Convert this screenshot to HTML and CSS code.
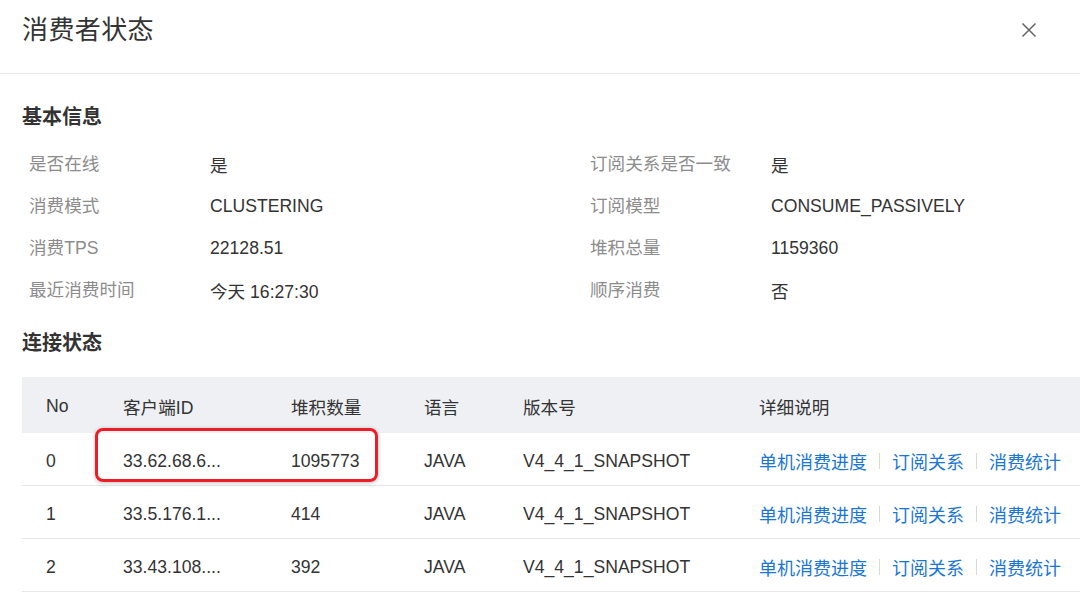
FILE: index.html
```html
<!DOCTYPE html>
<html lang="zh">
<head>
<meta charset="utf-8">
<title>消费者状态</title>
<link rel="stylesheet" href="styles.css">
</head>
<body>
<div class="dialog">
  <div class="dlg-header">
    <div class="dlg-title">消费者状态</div>
    <svg class="close" width="16" height="16" viewBox="0 0 16 16"><path d="M1.5 1.5 L14.5 14.5 M14.5 1.5 L1.5 14.5" stroke="#666" stroke-width="1.5" fill="none"/></svg>
  </div>
  <div class="dlg-body">
    <div class="section-title first">基本信息</div>
    <div class="info-grid">
      <div class="lbl">是否在线</div><div class="val">是</div>
      <div class="lbl">订阅关系是否一致</div><div class="val">是</div>
      <div class="lbl">消费模式</div><div class="val">CLUSTERING</div>
      <div class="lbl">订阅模型</div><div class="val">CONSUME_PASSIVELY</div>
      <div class="lbl">消费TPS</div><div class="val">22128.51</div>
      <div class="lbl">堆积总量</div><div class="val">1159360</div>
      <div class="lbl">最近消费时间</div><div class="val">今天 16:27:30</div>
      <div class="lbl">顺序消费</div><div class="val">否</div>
    </div>
    <div class="section-title second">连接状态</div>
    <div class="table">
      <div class="tr th">
        <div class="td">No</div><div class="td">客户端ID</div><div class="td">堆积数量</div><div class="td">语言</div><div class="td">版本号</div><div class="td">详细说明</div>
      </div>
      <div class="tr">
        <div class="td">0</div><div class="td">33.62.68.6...</div><div class="td">1095773</div><div class="td">JAVA</div><div class="td">V4_4_1_SNAPSHOT</div>
        <div class="td links"><a>单机消费进度</a><span class="sep"></span><a>订阅关系</a><span class="sep"></span><a>消费统计</a></div>
      </div>
      <div class="tr">
        <div class="td">1</div><div class="td">33.5.176.1...</div><div class="td">414</div><div class="td">JAVA</div><div class="td">V4_4_1_SNAPSHOT</div>
        <div class="td links"><a>单机消费进度</a><span class="sep"></span><a>订阅关系</a><span class="sep"></span><a>消费统计</a></div>
      </div>
      <div class="tr">
        <div class="td">2</div><div class="td">33.43.108....</div><div class="td">392</div><div class="td">JAVA</div><div class="td">V4_4_1_SNAPSHOT</div>
        <div class="td links"><a>单机消费进度</a><span class="sep"></span><a>订阅关系</a><span class="sep"></span><a>消费统计</a></div>
      </div>
      <div class="highlight"></div>
    </div>
  </div>
</div>
</body>
</html>
```

FILE: styles.css
```css
* { box-sizing: border-box; }
html, body {
  margin: 0;
  padding: 0;
  background: #fff;
  width: 1080px;
  height: 593px;
  overflow: hidden;
}
body {
  font-family: "Liberation Sans", "Noto Sans CJK SC", sans-serif;
  color: #333;
}
.dlg-header {
  height: 74px;
  border-bottom: 1px solid #e9e9e9;
  display: flex;
  align-items: center;
  justify-content: space-between;
  padding: 0 43px 14px 22px;
}
.dlg-title {
  font-size: 26px;
  line-height: 32px;
  color: #333;
  letter-spacing: 0.4px;
}
.close { display: block; }
.dlg-body {
  padding: 0 0 0 22px;
}
.section-title {
  font-size: 20px;
  font-weight: bold;
  line-height: 28px;
  color: #333;
}
.section-title.first { margin-top: 29px; }
.section-title.second { margin-top: 19px; }
.info-grid {
  margin-top: 11px;
  display: grid;
  grid-template-columns: 181px 380px 181px 1fr;
  grid-auto-rows: 42px;
  padding-left: 7px;
  align-items: center;
  font-size: 17.6px;
}
.lbl { color: #8c8c8c; padding-bottom: 1px; }
.val { color: #333; padding-top: 2px; }
.table {
  margin-top: 20px;
  position: relative;
  font-size: 17.6px;
}
.tr {
  display: grid;
  grid-template-columns: 77px 168px 133px 99px 236px 1fr;
  padding-left: 24px;
  padding-top: 4px;
  height: 53px;
  align-items: center;
  border-bottom: 1px solid #e6e6e6;
}
.tr.th {
  height: 56px;
  padding-top: 2px;
  background: #eef0f4;
  border-bottom: none;
  color: #333;
}
.td {
  white-space: nowrap;
}
.links {
  display: flex;
  align-items: center;
  font-size: 18px;
  color: #1a76d2;
}
.links a { color: #1a76d2; }
.sep {
  display: inline-block;
  width: 1px;
  height: 16px;
  background: #d9d9d9;
  margin: 0 12px;
}
.highlight {
  position: absolute;
  left: 73px;
  top: 51px;
  width: 283px;
  height: 54px;
  border: 3px solid #ee1c25;
  border-radius: 8px;
  box-shadow: 0 1px 4px rgba(0,0,0,0.25);
}
```
